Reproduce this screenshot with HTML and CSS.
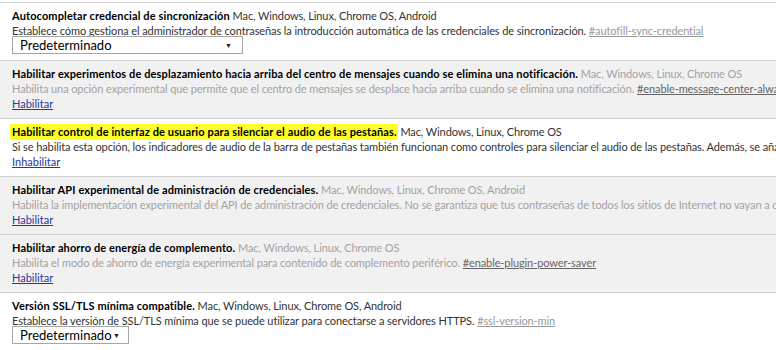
FILE: index.html
```html
<!DOCTYPE html>
<html lang="es">
<head>
<meta charset="utf-8">
<title>Flags</title>
<link rel="stylesheet" href="styles.css">
</head>
<body>
<div class="list">
  <div class="flag">
    <div class="line"><span class="name">Autocompletar credencial de sincronización</span> <span class="plat">Mac, Windows, Linux, Chrome OS, Android</span></div>
    <div class="line desc">Establece cómo gestiona el administrador de contraseñas la introducción automática de las credenciales de sincronización. <a class="perma" href="#autofill-sync-credential">#autofill-sync-credential</a></div>
    <div class="ctrl"><div class="select wide"><span>Predeterminado</span><span class="arrow">▼</span></div></div>
  </div>
  <div class="flag off">
    <div class="line"><span class="name">Habilitar experimentos de desplazamiento hacia arriba del centro de mensajes cuando se elimina una notificación.</span> <span class="plat">Mac, Windows, Linux, Chrome OS</span></div>
    <div class="line desc">Habilita una opción experimental que permite que el centro de mensajes se desplace hacia arriba cuando se elimina una notificación. <a class="perma" href="#enable-message-center-always-scroll-up-upon-notification-removal">#enable-message-center-always-scroll-up-upon-notification-removal</a></div>
    <div class="ctrl"><a class="act" href="#">Habilitar</a></div>
  </div>
  <div class="flag">
    <div class="line"><span class="name mark">Habilitar control de interfaz de usuario para silenciar el audio de las pestañas.</span> <span class="plat">Mac, Windows, Linux, Chrome OS</span></div>
    <div class="line desc">Si se habilita esta opción, los indicadores de audio de la barra de pestañas también funcionan como controles para silenciar el audio de las pestañas. Además, se añaden comandos al menú contextual de la pestaña. <a class="perma" href="#enable-tab-audio-muting">#enable-tab-audio-muting</a></div>
    <div class="ctrl"><a class="act" href="#">Inhabilitar</a></div>
  </div>
  <div class="flag off">
    <div class="line"><span class="name">Habilitar API experimental de administración de credenciales.</span> <span class="plat">Mac, Windows, Linux, Chrome OS, Android</span></div>
    <div class="line desc">Habilita la implementación experimental del API de administración de credenciales. No se garantiza que tus contraseñas de todos los sitios de Internet no vayan a quedar expuestas. <a class="perma" href="#enable-credential-manager-api">#enable-credential-manager-api</a></div>
    <div class="ctrl"><a class="act" href="#">Habilitar</a></div>
  </div>
  <div class="flag off">
    <div class="line"><span class="name">Habilitar ahorro de energía de complemento.</span> <span class="plat">Mac, Windows, Linux, Chrome OS</span></div>
    <div class="line desc">Habilita el modo de ahorro de energía experimental para contenido de complemento periférico. <a class="perma" href="#enable-plugin-power-saver">#enable-plugin-power-saver</a></div>
    <div class="ctrl"><a class="act" href="#">Habilitar</a></div>
  </div>
  <div class="flag">
    <div class="line"><span class="name">Versión SSL/TLS mínima compatible.</span> <span class="plat">Mac, Windows, Linux, Chrome OS, Android</span></div>
    <div class="line desc">Establece la versión de SSL/TLS mínima que se puede utilizar para conectarse a servidores HTTPS. <a class="perma" href="#ssl-version-min">#ssl-version-min</a></div>
    <div class="ctrl"><div class="select narrow"><span>Predeterminado</span><span class="arrow">▼</span></div></div>
  </div>
</div>
</body>
</html>
```
FILE: styles.css
```css
html, body {
  margin: 0;
  padding: 0;
  background: #fff;
}
body {
  font-family: "Lato", "Liberation Sans", sans-serif;
  font-size: 11px;
  color: #333;
  overflow: hidden;
}
.list {
  padding-top: 2px;
}
.flag {
  border-top: 1px solid #cfcfcf;
  padding: 5px 12px 6px;
  background: #fff;
  overflow: hidden;
}
.flag.off {
  background: #f1f1f1;
  color: #a3a3a3;
}
.line {
  font-size: 11px;
  line-height: 15px;
  height: 15px;
  white-space: nowrap;
  letter-spacing: -0.1px;
}
.name {
  font-weight: bold;
  color: #000;
  letter-spacing: 0.12px;
}
.name.mark {
  background: #ffff2a;
  padding: 1px 1px 2px;
  margin-left: -2px;
  padding-left: 2px;
}
.perma {
  color: #999;
  text-decoration: underline;
}
.flag.off .perma {
  color: #666;
}
.ctrl {
  height: 16px;
  line-height: 16px;
}
.act {
  color: #2438a0;
  text-decoration: underline;
}
.select {
  display: inline-flex;
  align-items: center;
  justify-content: space-between;
  box-sizing: border-box;
  height: 18px;
  margin-top: -2px;
  border: 1px solid #a6a6a6;
  background: #fff;
  color: #000;
  font-family: "Lato", "Liberation Sans", sans-serif;
  font-size: 13px;
  line-height: 16px;
  padding: 0 10px 0 7px;
}
.select.wide {
  width: 231px;
}
.select.narrow {
  width: 117px;
  padding-right: 8px;
}
.arrow {
  font-size: 7px;
  color: #222;
}
```
